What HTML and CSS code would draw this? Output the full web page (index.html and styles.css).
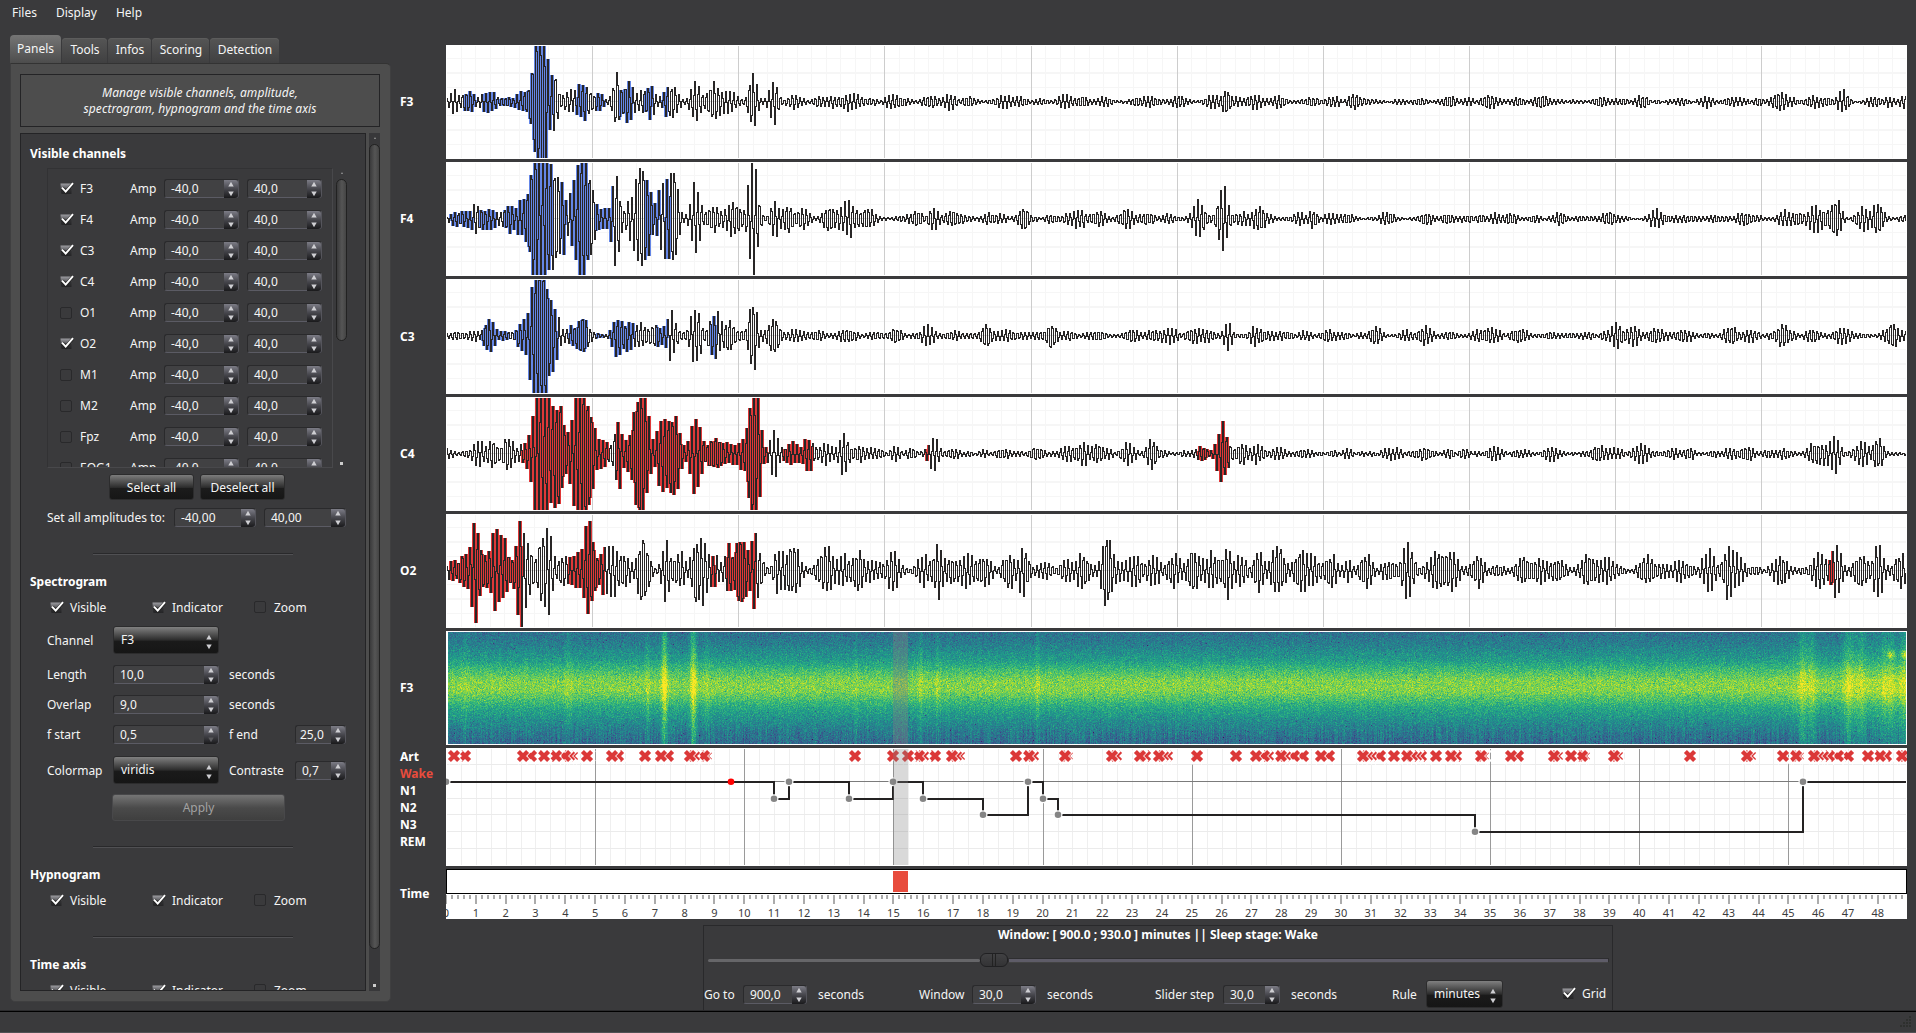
FILE: index.html
```html
<!DOCTYPE html>
<html lang="en">
<head>
<meta charset="utf-8">
<title>Sleep viewer</title>
<link rel="stylesheet" href="styles.css">
</head>
<body>
<svg class="defs" width="0" height="0">
  <defs>
    <linearGradient id="box" x1="0" y1="0" x2="0" y2="1"><stop offset="0" stop-color="#9d9da2"/><stop offset=".45" stop-color="#5c5c60"/><stop offset=".5" stop-color="#333335"/><stop offset="1" stop-color="#242426"/></linearGradient>
    <symbol id="check" viewBox="0 0 14 13"><path d="M.5 1.5H11.500V12H2.500Q1 12 1 10.500Z" fill="url(#box)"/><path d="M2.200 6L5.800 10L12.900 1.500" fill="none" stroke="#222" stroke-width="3.400"/><path d="M2 5.600L5.700 9.600L13 1.200" fill="none" stroke="#fff" stroke-width="2"/></symbol>
    <symbol id="arrows" viewBox="0 0 14 18"><path d="M7 1.800L9.700 6.500H4.300Z" fill="#cfcfd3"/><path d="M7 16.300L9.700 11.500H4.300Z" fill="#cfcfd3"/></symbol>
  </defs>
</svg>
<div class="app">
  <nav class="menu"><span>Files</span><span>Display</span><span>Help</span></nav>
  <div class="main">
    <aside class="side">
      <div class="tabs"><span class="tab on">Panels</span><span class="tab t1">Tools</span><span class="tab t2">Infos</span><span class="tab t3">Scoring</span><span class="tab t4">Detection</span></div>
      <div class="pane">
        <div class="desc">Manage visible channels, amplitude,<br>spectrogram, hypnogram and the time axis</div>
        <div class="scroller">
          <div class="settings">
            <h2 class="h-first">Visible channels</h2>
            <div class="listwrap">
              <div class="list" id="channels"></div>
              <div class="bar inner"><i class="up"></i><i class="thumb"></i><i class="dot"></i></div>
            </div>
            <div class="buttons"><span class="btn">Select all</span><span class="btn">Deselect all</span></div>
            <div class="row setall"><span class="lab">Set all amplitudes to:</span><span class="spin w82">-40,00<svg><use href="#arrows"/></svg></span><span class="spin w82">40,00<svg><use href="#arrows"/></svg></span></div>
            <hr>
            <h2>Spectrogram</h2>
            <div class="checks"><span><svg><use href="#check"/></svg>Visible</span><span><svg><use href="#check"/></svg>Indicator</span><span><i class="cb"></i>Zoom</span></div>
            <div class="row r-channel"><span class="lab">Channel</span><span class="combo">F3<svg><use href="#arrows"/></svg></span></div>
            <div class="row r-length"><span class="lab">Length</span><span class="spin w106">10,0<svg><use href="#arrows"/></svg></span><span class="unit">seconds</span></div>
            <div class="row r-length"><span class="lab">Overlap</span><span class="spin w106">9,0<svg><use href="#arrows"/></svg></span><span class="unit">seconds</span></div>
            <div class="row r-length"><span class="lab">f start</span><span class="spin w106">0,5<svg viewBox="0 0 14 18"><path d="M7 1.800L9.700 6.500H4.300Z" fill="#cfcfd3"/><path d="M7 16.300L9.700 11.500H4.300Z" fill="#5a5a5d"/></svg></span><span class="unit">f end</span><span class="spin w51 tight">25,0<svg><use href="#arrows"/></svg></span></div>
            <div class="row r-color"><span class="lab">Colormap</span><span class="combo">viridis<svg><use href="#arrows"/></svg></span><span class="unit">Contraste</span><span class="spin w51">0,7<svg><use href="#arrows"/></svg></span></div>
            <div class="btn apply">Apply</div>
            <hr class="hr2">
            <h2>Hypnogram</h2>
            <div class="checks"><span><svg><use href="#check"/></svg>Visible</span><span><svg><use href="#check"/></svg>Indicator</span><span><i class="cb"></i>Zoom</span></div>
            <hr class="hr3">
            <h2>Time axis</h2>
            <div class="checks"><span><svg><use href="#check"/></svg>Visible</span><span><svg><use href="#check"/></svg>Indicator</span><span><i class="cb"></i>Zoom</span></div>
          </div>
          <div class="bar outer"><i class="up"></i><i class="thumb"></i><i class="dot"></i></div>
        </div>
      </div>
    </aside>
    <section class="view">
      <div class="plots">
        <b>F3</b><canvas class="trace" width="1461" height="114"></canvas>
        <b>F4</b><canvas class="trace" width="1461" height="114"></canvas>
        <b>C3</b><canvas class="trace" width="1461" height="115"></canvas>
        <b>C4</b><canvas class="trace" width="1461" height="114"></canvas>
        <b>O2</b><canvas class="trace" width="1461" height="114"></canvas>
        <b>F3</b><canvas id="spec" width="1461" height="114"></canvas>
        <div class="stages"><b>Art</b><b class="cur">Wake</b><b>N1</b><b>N2</b><b>N3</b><b>REM</b></div><svg id="hyp" width="1461" height="118"></svg>
        <b>Time</b><svg id="time" width="1461" height="50"></svg>
      </div>
      <div class="control">
        <div class="title">Window: [ 900.0 ; 930.0 ] minutes || Sleep stage: Wake</div>
        <div class="slider"><i class="past"></i><i class="handle"></i><i class="rest"></i></div>
        <div class="fields">
          <span>Go to</span><span class="spin w64">900,0<svg><use href="#arrows"/></svg></span><span>seconds</span>
          <span>Window</span><span class="spin w64">30,0<svg><use href="#arrows"/></svg></span><span>seconds</span>
          <span>Slider step</span><span class="spin w57">30,0<svg><use href="#arrows"/></svg></span><span>seconds</span>
          <span>Rule</span><span class="combo rule">minutes<svg><use href="#arrows"/></svg></span>
          <span class="grid"><svg><use href="#check"/></svg>Grid</span>
        </div>
      </div>
    </section>
  </div>
  <footer class="status"><svg width="12" height="12" fill="#2e302e"><path d="M9 0h2v2h-2zM6 3h2v2h-2zM9 3h2v2h-2zM3 6h2v2h-2zM6 6h2v2h-2zM9 6h2v2h-2zM0 9h2v2h-2zM3 9h2v2h-2zM6 9h2v2h-2zM9 9h2v2h-2z"/></svg></footer>
</div>
<script src="app.js"></script>
</body>
</html>
```
FILE: styles.css
```css
* { box-sizing: border-box; }
body { margin: 0; width: 1916px; height: 1033px; overflow: hidden; background: #3a3a3c; color: #f5f5f5; font: 12px/17px "Noto Sans", sans-serif; white-space: nowrap; }
.defs { position: absolute; }
.app { display: flex; flex-direction: column; height: 1033px; }
.menu { height: 35px; padding: 4px 0 0 12px; display: flex; gap: 19px; }
.main { display: flex; height: 976px; }
.side { width: 381px; margin-left: 10px; }
.tabs { display: flex; height: 28px; align-items: flex-end; gap: 1px; }
.tab { height: 25px; border-radius: 4px 4px 0 0; background: linear-gradient(#555, #404041); text-align: center; line-height: 24px; padding-left: 1px; box-shadow: inset 0 1px #5c5c5c; }
.tab.on { width: 51px; height: 28px; line-height: 28px; padding-left: 0; background: linear-gradient(#757575, #4d4d4d); box-shadow: none; }
.t1 { width: 45px; } .t2 { width: 43px; } .t3 { width: 57px; } .t4 { width: 69px; }
.pane { height: 939px; background: #4d4d4d; border: 1px solid #3f3f40; border-top-color: #333; border-radius: 0 5px 5px 5px; padding: 10px 10px 0 9px; }
.desc { height: 53px; border: 1px solid #242426; text-align: center; font-style: italic; line-height: 16px; padding-top: 10px; letter-spacing: .06px; }
.scroller { display: flex; justify-content: space-between; margin-top: 6px; height: 858px; }
.settings { width: 346px; background: #3a3a3c; border: 1px solid #242426; overflow: hidden; padding-left: 9px; }
h2 { margin: 0; font-size: 12px; line-height: 18px; height: 18px; font-weight: 700; color: #fff; }
.h-first { margin-top: 11px; }
.listwrap { display: flex; margin: 5px 0 0 17px; gap: 3px; height: 300px; }
.list { width: 286px; height: 300px; border: 1px solid #323234; border-right-color: #48484b; border-bottom-color: #48484b; overflow: hidden; padding-top: 4px; }
.ch { display: flex; align-items: center; height: 31px; padding-left: 12px; }
.ch svg.ck { width: 14px; height: 13px; }
.cb { display: inline-block; width: 12px; height: 12px; border: 1px solid #29292b; border-radius: 2px; }
.ch .nm { margin-left: 6px; width: 50px; }
.ch .cb + .nm { margin-left: 8px; }
.ch .amp { width: 34px; }
.ch .spin + .spin { margin-left: 8px; }
.spin { position: relative; display: inline-block; height: 19px; border: 1px solid #2a2a2c; border-bottom-color: #5b5b64; border-right-color: #55555c; border-radius: 3px; background: #414143; padding-left: 6px; line-height: 18px; flex: none; }
.spin svg { position: absolute; right: 0; top: 0; width: 14px; height: 18px; background: linear-gradient(#7c7c86, #45454b 50%, #1a1a1c); border-radius: 0 3px 3px 0; }
.spin.tight { padding-left: 4px; }
.w75 { width: 75px; } .w82 { width: 82px; } .w106 { width: 106px; } .w51 { width: 51px; } .w64 { width: 64px; } .w57 { width: 57px; }
.bar { display: flex; flex-direction: column; align-items: center; width: 11px; }
.bar .thumb { width: 11px; border-radius: 6px; border: 1px solid #222; background: linear-gradient(90deg, #3a3a3b, #555 55%, #444); }
.bar .up { border: 1.5px solid transparent; border-top: 0; border-bottom: 2px solid #999; margin-top: 4px; }
.bar .dot { width: 3px; height: 3px; background: #ccc; }
.inner .thumb { margin-top: 5px; height: 162px; }
.inner .dot { margin-top: 121px; }
.outer { background: #38383a; }
.outer .thumb { margin-top: 5px; height: 805px; }
.outer .dot { margin-top: 35px; }
.buttons { display: flex; gap: 6px; margin: 6px 0 0 79px; }
.btn { height: 26px; width: 85px; text-align: center; line-height: 25px; border-radius: 3px; background: linear-gradient(#7c7c7c, #2c2c2c 52%, #1c1c1c 56%, #161616); border: 1px solid #2c2c2d; }
.row { display: flex; align-items: center; margin-left: 17px; }
.setall { height: 20px; margin-top: 7px; }
.setall .spin + .spin { margin-left: 8px; }
hr { margin: 26px 0 0 63px; width: 200px; height: 2px; border: 0; border-top: 1px solid #29292b; border-bottom: 1px solid #505053; }
hr + h2 { margin-top: 18px; }
.checks { display: flex; margin: 7px 0 0 20px; height: 18px; }
.checks span { width: 102px; display: flex; align-items: center; }
.checks svg { width: 14px; height: 13px; margin-right: 6px; }
.checks .cb { margin-right: 8px; }
.row .lab { width: 66px; }
.row.setall .lab { width: 127px; }
.combo { position: relative; width: 106px; height: 28px; border-radius: 3px; padding-left: 7px; line-height: 26px; background: linear-gradient(#808080, #2c2c2c 50%, #1a1a1a 55%, #161616); border: 1px solid #2c2c2d; }
.combo svg { position: absolute; right: 2px; top: 6px; width: 14px; height: 18px; }
.unit { margin-left: 10px; width: 66px; }
.r-channel { margin-top: 10px; height: 28px; }
.r-length { margin-top: 11px; height: 19px; }
.r-color { margin-top: 12px; height: 28px; }
.apply { width: 173px; height: 27px; margin: 10px 0 0 82px; color: #a2a2a2; background: linear-gradient(#757575, #4a4a4a 52%, #3f3f3f); border-color: #48484a; }
.hr2 { margin-top: 25px; }
.hr3 { margin-top: 27px; }
.view { margin-left: 4px; width: 1521px; padding-top: 10px; }
.plots { display: grid; grid-template-columns: 51px 1461px; grid-template-rows: 114px 114px 115px 114px 114px 114px 118px 50px; row-gap: 3px; align-items: center; }
.plots b { padding-left: 5px; color: #fff; }
.plots > b { padding-bottom: 1px; }
.plots canvas, .plots > svg { display: block; background: #fff; }
.stages { height: 118px; display: flex; flex-direction: column; }
.stages b { height: 17px; }
.stages .cur { color: #e84c3d; }
.control { margin: 6px 0 0 308px; width: 910px; height: 86px; border: 1px solid #29292b; }
.title { text-align: center; font-weight: 700; color: #fff; line-height: 18px; }
.slider { display: flex; align-items: center; padding-left: 4px; height: 32px; }
.slider .past { width: 272px; height: 3px; background: #666669; border-radius: 2px; }
.slider .rest { width: 601px; height: 5px; background: #5e5c68; border: 1px solid #2e2e30; border-bottom-color: #444; }
.slider .handle { width: 28px; height: 14px; border: 1px solid #202022; border-radius: 6px; background: linear-gradient(90deg, transparent 11px, #222 11px 12px, transparent 12px 14px, #222 14px 15px, transparent 15px), linear-gradient(#414143, #333335); }
.fields { display: grid; grid-template-columns: 39px 75px 101px 53px 75px 108px 68px 68px 101px 34px 136px 60px; align-items: center; height: 30px; margin-top: 3px; }
.rule { width: 77px; }
.grid { display: flex; align-items: center; gap: 6px; margin-top: -2px; }
.grid svg { width: 14px; height: 13px; }
.status { height: 22px; border-top: 1px solid #000; border-bottom: 1px solid #515155; display: flex; justify-content: flex-end; align-items: flex-end; padding: 0 4px 4px 0; box-shadow: 0 -1px #2b2b2d; }
```
FILE: app.js
```js
const names = ['F3', 'F4', 'C3', 'C4', 'O1', 'O2', 'M1', 'M2', 'Fpz', 'EOG1'];
const off = ['O1', 'M1', 'M2', 'Fpz', 'EOG1'];
const arrows = '<svg><use href="#arrows"/></svg>';
document.getElementById('channels').innerHTML = names.map(n =>
  '<div class="ch">' + (off.includes(n) ? '<i class="cb"></i>' : '<svg class="ck"><use href="#check"/></svg>') +
  '<span class="nm">' + n + '</span><span class="amp">Amp</span><span class="spin w75">-40,0' + arrows +
  '</span><span class="spin w75">40,0' + arrows + '</span></div>').join('');

function rng(seed) {
  return () => {
    seed = (seed + 0x6D2B79F5) | 0;
    let t = Math.imul(seed ^ (seed >>> 15), 1 | seed);
    t = (t + Math.imul(t ^ (t >>> 7), 61 | t)) ^ t;
    return ((t ^ (t >>> 14)) >>> 0) / 4294967296;
  };
}

const LEFT = 446, W = 1461;
const BLUE = '#6486e6', RED = '#df3838';

// Each burst is "centre amplitude width"; width defaults to 6.
const signals = [
  { color: BLUE, base: 3,
    bursts: '453 13 4,468 12 6,488 12 7,505 5,523 10 8,539 110 5.500,547 30 4,554 34 3,568 12,582 21 7,598 9 4,616 33 3.500,627 24 5,640 12 5,649 18 5,670 20 6,695 21 5,713 21 6,728 12 7,752 36 3.500,773 24 4,793 8,820 5 8,850 9 10,893 8,928 5,948 8,968 5,1008 5 12,1064 7,1082 6,1103 6,1148 6,1178 7,1212 8,1225 14 4,1253 8,1278 7,1312 5,1355 8,1450 5,1488 8,1517 4,1542 6,1613 3,1680 4,1730 4,1780 11 5,1812 7,1842 12 5,1873 6,1903 5',
    marks: [[464, 475], [482, 496], [500, 530], [531, 552], [576, 586], [596, 604], [619, 632], [645, 652], [662, 667]] },
  { color: BLUE, base: 3,
    bursts: '454 6 4,463 8,475 15 5,483 11,492 10 5,508 15 5,521 18 6,539 110 8,553 62 4,560 46 4,572 30 5,583 90 6,592 25 4,601 12 6,615 50 4,630 22 5,640 74 5,648 34 4,662 40 5,672 58 4.500,695 41 4,713 16,732 21 7,752 62 4.500,774 21 4,787 17 5,802 11,828 14,847 19 8,867 12,915 9,933 13 5,953 9,988 6,1023 14 4,1067 6,1078 11,1098 9,1125 12,1148 6,1168 5,1198 18,1222 33 5,1240 7,1258 15 5,1298 6,1312 11 4,1330 6,1345 5,1385 6,1427 6,1448 5,1480 4,1508 5,1558 6,1608 8,1655 10,1687 4,1713 4,1755 4,1785 8,1797 7,1813 17 5,1823 11 5,1835 24 4.500,1862 13,1877 20 4.500',
    marks: [[450, 457], [461, 472], [480, 496], [504, 531], [532, 551], [561, 566], [570, 588], [596, 612], [645, 651], [654, 659], [665, 669]] },
  { color: BLUE, base: 3.700,
    bursts: '472 5,488 18 5,500 4,522 17 6,539 110 7,552 36 5,571 9,582 25 5,617 24 5,627 17 5,638 14,655 14,670 25 5,695 34 4.500,714 29 5,728 19 5,752 45 3.500,773 25 4.500,793 5,817 6,843 4,895 8,927 11,955 5,985 14 4,1002 6,1023 4,1051 15 4.500,1098 6,1133 6,1150 5,1168 5,1205 7,1227 16 3.500,1255 10,1278 4,1303 4,1327 7,1375 12 5,1405 6,1425 9,1450 4,1477 6,1488 8,1520 3,1550 4,1616 14 4.500,1633 10,1655 8,1680 6,1730 11,1782 13 5,1812 7,1840 9,1892 14 4.500,1905 6',
    marks: [[482, 497], [498, 508], [515, 530], [531, 557], [569, 586], [596, 603], [609, 633], [656, 667], [711, 715]] },
  { color: RED, base: 3.400,
    bursts: '478 15 5,492 17 5,507 23 4.500,522 10,541 110 7,557 72 5.500,570 28 5,582 110 7,602 14 8,617 36 4,627 17 5,640 95 6,662 44 5,672 57 5.500,695 43 5,714 22 7,728 10,742 15 7,753 90 5,773 31 3.500,792 12 8,808 19 5,825 13,843 22 4.500,862 7,875 6,933 17 5,953 6,1005 6,1037 6,1068 9,1082 12,1097 11,1127 13 5,1151 17 4.500,1200 9,1222 33 5,1240 11,1257 10,1278 4,1300 4,1392 6,1423 8,1493 8,1522 4,1550 8,1597 10,1612 6,1642 9,1687 4,1730 6,1745 8,1783 6,1813 12,1823 11,1834 22 4.500,1862 13,1877 19 4.500',
    marks: [[522, 607], [616, 767], [783, 811], [925, 928], [1198, 1228]] },
  { color: RED, base: 5.500,
    bursts: '453 11 5,463 21 4,474 52 4.500,480 24 5,495 38 7,503 29,520 60 4.500,528 30 4,542 48 4.500,548 50 3.500,563 18,577 18,588 55 5,602 20,612 25,622 20,642 41 5,665 31 4,678 22 5,695 38 4,702 36 4,713 20 5,728 31 4,740 44 5,753 41 4,758 23 4,778 25 5,792 32 6,825 28 7,842 18,857 25 5,870 12,892 25 5,922 17,937 33 4.500,950 15,963 15,970 14,983 17,1008 21 5,1023 28 4.500,1045 10,1065 12,1081 20 5,1106 44 4.500,1115 12,1134 18,1153 18,1173 18,1192 28 4.500,1212 20,1227 29 4,1240 17 5,1258 23 4.500,1277 30,1300 23,1310 16,1330 18,1365 10,1392 8,1407 37 5,1437 26 7,1450 26,1478 18 5,1522 18,1538 16,1557 14,1587 21 5,1608 13,1647 17,1678 13,1708 18,1728 31 5,1737 16,1780 18,1818 21,1835 30 5,1860 21,1877 31 4.500,1900 20',
    marks: [[449, 521], [568, 604], [711, 715], [727, 755], [1829, 1832]] }
];

document.querySelectorAll('.trace').forEach((cv, k) => {
  const s = signals[k], g = cv.getContext('2d'), rand = rng(77 + k * 13);
  const H = cv.height;
  g.fillStyle = '#fff';
  g.fillRect(0, 0, W, H);
  g.fillStyle = '#f6f6f6';
  for (let i = 1; i < 100; i++) if (i % 10) g.fillRect(Math.round(i * 14.61), 1, 1, H - 2);
  [13, 27, 42, 70, 84, 99].forEach(y => g.fillRect(1, y, W - 2, y === 27 || y === 84 ? 2 : 1));
  g.fillStyle = '#cdcdcd';
  for (let i = 1; i < 10; i++) g.fillRect(Math.round(i * 146.13), 1, 1, H - 2);
  g.fillStyle = '#dedede';
  g.fillRect(1, 56, W - 2, 1);

  const bursts = s.bursts.split(',').map(t => t.split(' ').map(Number));
  const waves = Array.from({ length: 9 }, () => [0.04 + rand() * 0.22, rand() * 6.28]);
  const ys = [];
  let phase = 0;
  for (let x = 0; x < W; x++) {
    let e = 0;
    for (const [c, a, w = 6] of bursts) {
      const d = (x + LEFT - c) / w;
      if (Math.abs(d) < 4) e += a * a * Math.exp(-d * d);
    }
    let n = 0;
    for (const [f, p] of waves) n += Math.sin(x * f + p);
    const b = s.base * (0.3 + Math.abs(n) * 0.34);
    const amp = Math.sqrt(e + b * b) * (0.74 + rand() * 0.32);
    phase += 2 * Math.PI / 3.87 * (1 + (rand() - 0.5) * 0.16);
    ys.push(56.4 - amp * Math.sin(phase));
  }
  const span = x => {
    const a = ys[Math.max(0, x - 1)], b = ys[x];
    const t = Math.max(1, Math.round(Math.min(a, b))), u = Math.min(H - 1, Math.round(Math.max(a, b)) + 1);
    return [t, Math.max(1, u - t)];
  };
  g.fillStyle = s.color;
  for (const [a, b] of s.marks)
    for (let x = a - LEFT; x <= b - LEFT; x++) {
      const [t, h] = span(x);
      g.fillRect(x - 1, t, 3, h);
    }
  g.fillStyle = '#282626';
  for (let x = 1; x < W - 1; x++) {
    const [t, h] = span(x);
    g.fillRect(x, t, 1, h);
  }
});

const viridis = [[68, 1, 84], [72, 40, 120], [62, 74, 137], [49, 104, 142], [38, 130, 142], [31, 158, 137], [53, 183, 121], [109, 205, 89], [180, 222, 44], [253, 231, 37]];
(() => {
  const cv = document.getElementById('spec'), g = cv.getContext('2d'), rand = rng(5);
  g.fillStyle = '#fff';
  g.fillRect(0, 0, W, 114);
  const w = 1458, h = 112, img = g.createImageData(w, h);
  const profile = [[0, .37], [12, .43], [28, .55], [38, .69], [48, .8], [58, .81], [66, .72], [76, .59], [88, .49], [100, .41], [112, .34]];
  // centre x, gain, half width
  const streaks = [[465, .05, 4], [568, .05, 4], [647, .08, 2.5], [664, .24, 3], [693, .24, 3], [706, .05, 3], [856, .06, 2], [920, .07, 3], [937, .06, 2], [1037, .08, 2], [1802, .09, 4], [1811, .1, 4], [1800, .05, 12], [1848, .13, 5], [1860, .09, 5], [1884, .09, 3], [1891, .1, 4], [1904, .12, 5], [1875, .05, 30]];
  const spots = [[1891, 22, 4, 4], [1905, 22, 4, 4]];
  for (let x = 0; x < w; x++) {
    const X = x + 448;
    let gain = 0;
    for (const [c, a, s] of streaks) gain += a * Math.exp(-(((X - c) / s) ** 2));
    const low = (rand() - 0.5) * 0.13, mid = (rand() - 0.5) * 0.03;
    for (let y = 0; y < h; y++) {
      let i = 0;
      while (profile[i + 1][0] < y) i++;
      const [a, va] = profile[i], [b, vb] = profile[i + 1];
      let v = va + (vb - va) * (y - a) / (b - a) + gain + mid;
      if (y > 88) v += low * Math.min(1, (y - 88) / 12);
      v += (rand() + rand() + rand() - 1.5) * 0.12;
      if (rand() < 0.006) v -= 0.2;
      for (const [cx, cy, sx, sy] of spots) v += 0.3 * Math.exp(-(((X - cx) / sx) ** 2) - (((y - cy) / sy) ** 2));
      v = Math.max(0.02, Math.min(0.999, v)) * 9;
      const q = Math.min(8, Math.floor(v)), f = v - q, o = (y * w + x) * 4;
      for (let c = 0; c < 3; c++) img.data[o + c] = viridis[q][c] + (viridis[q + 1][c] - viridis[q][c]) * f;
      img.data[o + 3] = 255;
    }
  }
  g.putImageData(img, 2, 1);
  g.fillStyle = 'rgba(130,130,130,.38)';
  g.fillRect(447, 1, 15, 112);
})();

const MIN = 29.83;
(() => {
  let o = '<g shape-rendering="crispEdges">';
  for (let i = 1; i < 98; i++) if (i % 10) o += `<rect x="${Math.round(i * MIN / 2)}" y="1" width="1" height="116" fill="#efefef"/>`;
  for (const y of [16, 50, 66, 83, 100]) o += `<rect x="1" y="${y}" width="1459" height="1" fill="#ebebeb"/>`;
  for (let i = 5; i < 49; i += 5) o += `<rect x="${Math.round(i * MIN)}" y="1" width="1" height="116" fill="#9a9a9a"/>`;
  o += '<rect x="1" y="33" width="1459" height="1" fill="#7b7b7b"/></g>';
  const arts = '454 465 523 531 544 556 565 569 572 587 612 618 645 661 668 690 694 704 706 855 893 908 919 923 935 952 956 959 1016 1029 1033 1065 1067 1112 1116 1140 1145 1159 1163 1167 1197 1236 1256 1264 1268 1281 1285 1294 1303 1321 1329 1363 1367 1371 1380 1394 1407 1412 1416 1421 1436 1451 1456 1481 1483 1511 1518 1554 1557 1571 1582 1584 1614 1617 1690 1747 1750 1783 1796 1798 1814 1818 1823 1829 1838 1848 1868 1880 1886 1902 1905'.split(' ').map(Number);
  for (const x of arts.slice().reverse()) {
    const c = x - LEFT, p = `M${c - 4.600} 3.400L${c + 4.600} 12.600M${c + 4.600} 3.400L${c - 4.600} 12.600`;
    o += `<path d="${p}" stroke="#fff" stroke-width="5.800" stroke-linecap="square"/><path d="${p}" stroke="#db3838" stroke-width="4.300"/>`;
  }
  const level = { W: 34, 1: 51, 2: 67, 3: 84 };
  const steps = [[0, 'W'], [11, 1], [11.500, 'W'], [13.500, 1], [15, 'W'], [16, 1], [18, 2], [19.500, 'W'], [20, 1], [20.500, 2], [34.500, 3], [45.500, 'W']];
  let d = '';
  steps.forEach(([m, s], i) => {
    const x = Math.round(m * MIN);
    d += (i ? `H${x}V` : `M${x} `) + level[s];
  });
  o += `<path d="${d}H1460" fill="none" stroke="#242222" stroke-width="2" shape-rendering="crispEdges"/>`;
  for (const [m, s] of steps) {
    const x = Math.round(m * MIN), y = level[s] - 0.3;
    o += `<circle cx="${x}" cy="${y}" r="4.500" fill="#fff"/><circle cx="${x}" cy="${y}" r="3.300" fill="#858585"/>`;
  }
  o += '<circle cx="285" cy="33.700" r="3.300" fill="#f00"/><rect x="447" y="1" width="15" height="116" fill="#808080" fill-opacity=".3"/>';
  document.getElementById('hyp').innerHTML = o;

  let t = '<rect x=".5" y=".5" width="1460" height="24" fill="#fff" stroke="#000"/><rect x="447" y="2" width="15" height="21" fill="#e84c3d"/>';
  for (let i = 0; i < 245; i++) {
    const major = i % 5 === 0;
    t += `<rect x="${Math.round(i * MIN / 5) - 1}" y="26" width="2" height="${major ? 9 : 4}" fill="#ababab"/>`;
    if (major) t += `<text x="${(i * MIN / 5).toFixed(1)}" y="48" text-anchor="middle" font-size="11" fill="#3c3c3c">${i / 5}</text>`;
  }
  document.getElementById('time').innerHTML = t;
})();
```
